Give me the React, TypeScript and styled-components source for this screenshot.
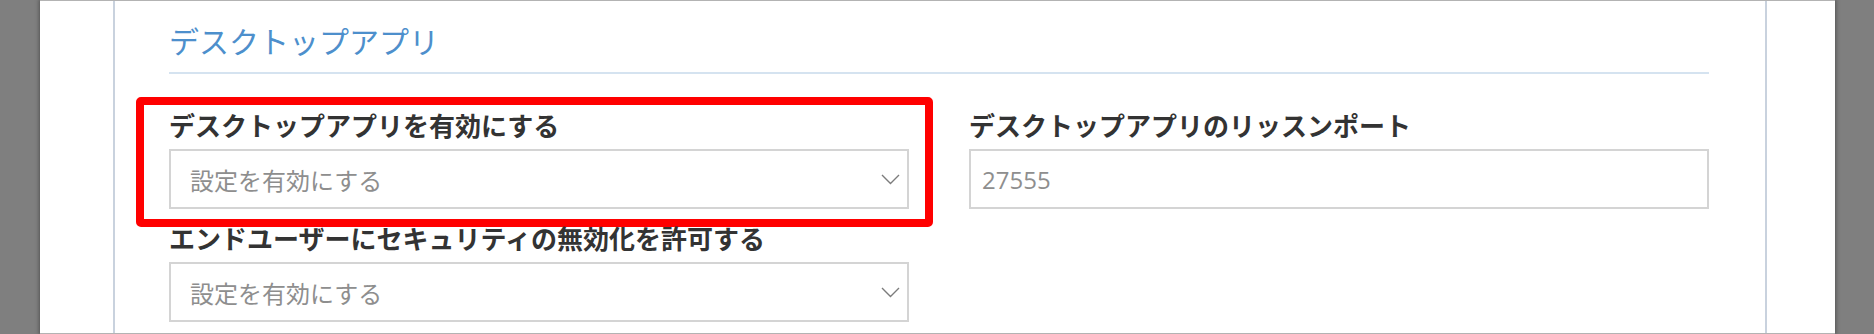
import React from 'react';
import styled, { createGlobalStyle } from 'styled-components';

const GlobalStyle = createGlobalStyle`
  html, body {
    margin: 0;
    padding: 0;
    background: #7f7f7f;
  }
  * {
    box-sizing: border-box;
  }
`;

const Frame = styled.div`
  display: flex;
  height: 334px;
  padding: 0 39px 0 40px;
  background: #7f7f7f;
  font-family: 'Open Sans', 'Noto Sans CJK JP', sans-serif;
`;

const Sheet = styled.div`
  flex: 1;
  display: flex;
  padding: 0 68px 0 73px;
  background: #fff;
  border-top: 1px solid #b3b3b3;
  border-bottom: 1px solid #b3b3b3;
  box-shadow: 0 0 4px 1px rgba(0, 0, 0, 0.35);
`;

const Column = styled.div`
  flex: 1;
  padding: 0 56px 0 54px;
  border-left: 2px solid #c9d2de;
  border-right: 2px solid #c9d2de;
`;

const Heading = styled.h2`
  margin: 21px 0 0;
  padding-bottom: 10px;
  border-bottom: 2px solid #d5e3f0;
  font-size: 30px;
  line-height: 40px;
  font-weight: 400;
  color: #4d8fcc;
`;

const Grid = styled.div`
  display: grid;
  grid-template-columns: 1fr 1fr;
  column-gap: 60px;
  row-gap: 14px;
  margin-top: 36px;
`;

const Field = styled.div`
  position: relative;
  display: flex;
  flex-direction: column;
  gap: 7px;
`;

// red annotation frame drawn over the first field
const Highlight = styled.div`
  position: absolute;
  top: -13px;
  bottom: -18px;
  left: -33px;
  right: -24px;
  border: 8px solid #ff0000;
  border-radius: 5px;
  pointer-events: none;
`;

const Label = styled.label`
  font-size: 26px;
  line-height: 32px;
  font-weight: 700;
  color: #333;
  white-space: nowrap;
`;

const Control = styled.div<{ $inset: number }>`
  display: flex;
  align-items: center;
  justify-content: space-between;
  height: 60px;
  padding: 0 7px 0 ${p => p.$inset}px;
  border: 2px solid #d4d4d4;
  background: #fff;
  font-size: 24px;
  color: #8e8e8e;
`;

const Chevron = () => (
  <svg width="19" height="11" viewBox="0 0 19 11" fill="none">
    <polyline points="1,1 9.5,9.5 18,1" stroke="#7c7c7c" strokeWidth="1.4" />
  </svg>
);

const SelectBox = ({ value }: { value: string }) => (
  <Control $inset={19}>
    <span>{value}</span>
    <Chevron />
  </Control>
);

export default function App() {
  return (
    <>
      <GlobalStyle />
      <Frame>
        <Sheet>
          <Column>
            <Heading>デスクトップアプリ</Heading>
            <Grid>
              <Field>
                <Label>デスクトップアプリを有効にする</Label>
                <SelectBox value="設定を有効にする" />
                <Highlight />
              </Field>
              <Field>
                <Label>デスクトップアプリのリッスンポート</Label>
                <Control $inset={11}>
                  <span>27555</span>
                </Control>
              </Field>
              <Field>
                <Label>エンドユーザーにセキュリティの無効化を許可する</Label>
                <SelectBox value="設定を有効にする" />
              </Field>
            </Grid>
          </Column>
        </Sheet>
      </Frame>
    </>
  );
}
